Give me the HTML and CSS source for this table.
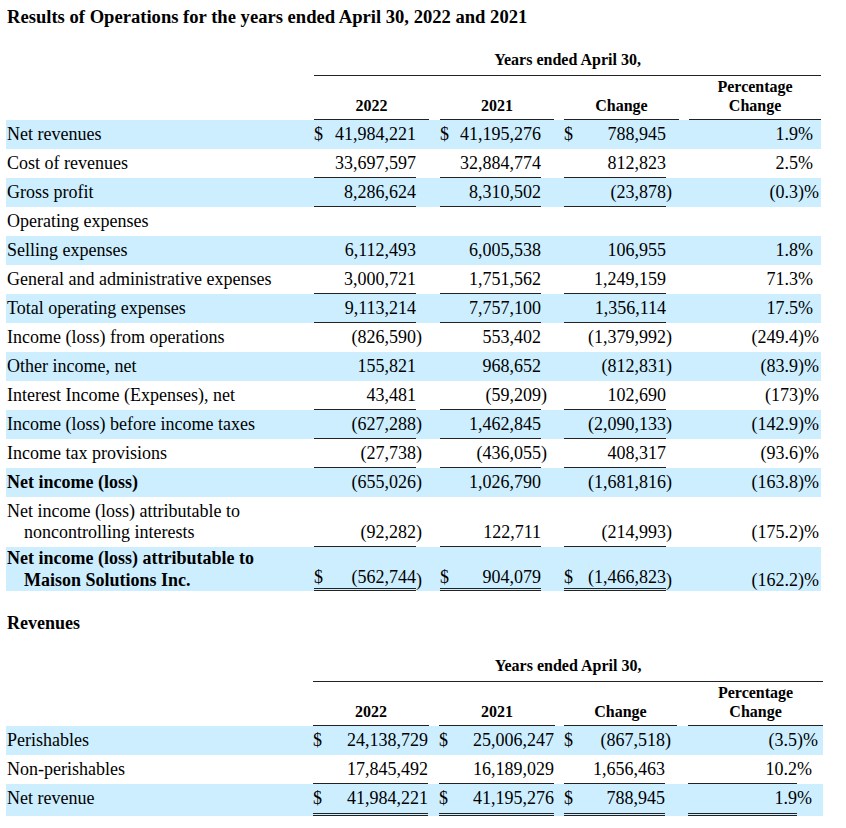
FILE: index.html
```html
<!DOCTYPE html>
<html lang="en">
<head>
  <meta charset="UTF-8">
  <title>Results of Operations</title>
  <link rel="stylesheet" href="styles.css">
</head>
<body>
  <h1 class="title">Results of Operations for the years ended April 30, 2022 and 2021</h1>

  <table class="fin ops">
    <colgroup>
      <col style="width:308px"><col style="width:12px"><col style="width:90px"><col style="width:13px">
      <col style="width:11px"><col style="width:12px"><col style="width:89px"><col style="width:13px">
      <col style="width:10px"><col style="width:12px"><col style="width:90px"><col style="width:13px">
      <col style="width:10px"><col style="width:109px"><col style="width:23px">
    </colgroup>
    <thead>
      <tr class="hd-top">
        <th></th>
        <th colspan="14" class="rule">Years ended April 30,</th>
      </tr>
      <tr class="hd">
        <th></th>
        <th colspan="3" class="u">2022</th><th></th>
        <th colspan="3" class="u">2021</th><th></th>
        <th colspan="3" class="u">Change</th><th></th>
        <th colspan="2" class="u">Percentage<br>Change</th>
      </tr>
    </thead>
    <tbody>
      <tr class="hl">
        <td class="lbl">Net revenues</td>
        <td class="cur">$</td><td class="num">41,984,221</td><td></td><td></td>
        <td class="cur">$</td><td class="num">41,195,276</td><td></td><td></td>
        <td class="cur">$</td><td class="num">788,945</td><td></td><td></td>
        <td class="num">1.9</td><td class="sfx">%</td>
      </tr>
      <tr>
        <td class="lbl">Cost of revenues</td>
        <td class="cur u"></td><td class="num u">33,697,597</td><td></td><td></td>
        <td class="cur u"></td><td class="num u">32,884,774</td><td></td><td></td>
        <td class="cur u"></td><td class="num u">812,823</td><td></td><td></td>
        <td class="num">2.5</td><td class="sfx">%</td>
      </tr>
      <tr class="hl">
        <td class="lbl">Gross profit</td>
        <td class="cur u"></td><td class="num u">8,286,624</td><td></td><td></td>
        <td class="cur u"></td><td class="num u">8,310,502</td><td></td><td></td>
        <td class="cur u"></td><td class="num u">(23,878</td><td class="sfx">)</td><td></td>
        <td class="num">(0.3</td><td class="sfx">)%</td>
      </tr>
      <tr>
        <td class="lbl">Operating expenses</td>
        <td></td><td></td><td></td><td></td>
        <td></td><td></td><td></td><td></td>
        <td></td><td></td><td></td><td></td>
        <td></td><td></td>
      </tr>
      <tr class="hl">
        <td class="lbl">Selling expenses</td>
        <td class="cur"></td><td class="num">6,112,493</td><td></td><td></td>
        <td class="cur"></td><td class="num">6,005,538</td><td></td><td></td>
        <td class="cur"></td><td class="num">106,955</td><td></td><td></td>
        <td class="num">1.8</td><td class="sfx">%</td>
      </tr>
      <tr>
        <td class="lbl">General and administrative expenses</td>
        <td class="cur u"></td><td class="num u">3,000,721</td><td></td><td></td>
        <td class="cur u"></td><td class="num u">1,751,562</td><td></td><td></td>
        <td class="cur u"></td><td class="num u">1,249,159</td><td></td><td></td>
        <td class="num">71.3</td><td class="sfx">%</td>
      </tr>
      <tr class="hl">
        <td class="lbl">Total operating expenses</td>
        <td class="cur u"></td><td class="num u">9,113,214</td><td></td><td></td>
        <td class="cur u"></td><td class="num u">7,757,100</td><td></td><td></td>
        <td class="cur u"></td><td class="num u">1,356,114</td><td></td><td></td>
        <td class="num">17.5</td><td class="sfx">%</td>
      </tr>
      <tr>
        <td class="lbl">Income (loss) from operations</td>
        <td class="cur"></td><td class="num">(826,590</td><td class="sfx">)</td><td></td>
        <td class="cur"></td><td class="num">553,402</td><td></td><td></td>
        <td class="cur"></td><td class="num">(1,379,992</td><td class="sfx">)</td><td></td>
        <td class="num">(249.4</td><td class="sfx">)%</td>
      </tr>
      <tr class="hl">
        <td class="lbl">Other income, net</td>
        <td class="cur"></td><td class="num">155,821</td><td></td><td></td>
        <td class="cur"></td><td class="num">968,652</td><td></td><td></td>
        <td class="cur"></td><td class="num">(812,831</td><td class="sfx">)</td><td></td>
        <td class="num">(83.9</td><td class="sfx">)%</td>
      </tr>
      <tr>
        <td class="lbl">Interest Income (Expenses), net</td>
        <td class="cur u"></td><td class="num u">43,481</td><td></td><td></td>
        <td class="cur u"></td><td class="num u">(59,209</td><td class="sfx">)</td><td></td>
        <td class="cur u"></td><td class="num u">102,690</td><td></td><td></td>
        <td class="num">(173</td><td class="sfx">)%</td>
      </tr>
      <tr class="hl">
        <td class="lbl">Income (loss) before income taxes</td>
        <td class="cur u"></td><td class="num u">(627,288</td><td class="sfx">)</td><td></td>
        <td class="cur u"></td><td class="num u">1,462,845</td><td></td><td></td>
        <td class="cur u"></td><td class="num u">(2,090,133</td><td class="sfx">)</td><td></td>
        <td class="num">(142.9</td><td class="sfx">)%</td>
      </tr>
      <tr>
        <td class="lbl">Income tax provisions</td>
        <td class="cur u"></td><td class="num u">(27,738</td><td class="sfx">)</td><td></td>
        <td class="cur u"></td><td class="num u">(436,055</td><td class="sfx">)</td><td></td>
        <td class="cur u"></td><td class="num u">408,317</td><td></td><td></td>
        <td class="num">(93.6</td><td class="sfx">)%</td>
      </tr>
      <tr class="hl">
        <td class="lbl strong">Net income (loss)</td>
        <td class="cur"></td><td class="num">(655,026</td><td class="sfx">)</td><td></td>
        <td class="cur"></td><td class="num">1,026,790</td><td></td><td></td>
        <td class="cur"></td><td class="num">(1,681,816</td><td class="sfx">)</td><td></td>
        <td class="num">(163.8</td><td class="sfx">)%</td>
      </tr>
      <tr>
        <td class="lbl">Net income (loss) attributable to<br><span class="ind">noncontrolling interests</span></td>
        <td class="cur u"></td><td class="num u">(92,282</td><td class="sfx">)</td><td></td>
        <td class="cur u"></td><td class="num u">122,711</td><td></td><td></td>
        <td class="cur u"></td><td class="num u">(214,993</td><td class="sfx">)</td><td></td>
        <td class="num">(175.2</td><td class="sfx">)%</td>
      </tr>
      <tr class="hl total">
        <td class="lbl strong">Net income (loss) attributable to<br><span class="ind">Maison Solutions Inc.</span></td>
        <td class="cur uu">$</td><td class="num uu">(562,744</td><td class="sfx">)</td><td></td>
        <td class="cur uu">$</td><td class="num uu">904,079</td><td></td><td></td>
        <td class="cur uu">$</td><td class="num uu">(1,466,823</td><td class="sfx">)</td><td></td>
        <td class="num">(162.2</td><td class="sfx">)%</td>
      </tr>
    </tbody>
  </table>

  <h2 class="sub">Revenues</h2>

  <table class="fin rev">
    <colgroup>
      <col style="width:307px"><col style="width:12px"><col style="width:103px"><col style="width:1px">
      <col style="width:10px"><col style="width:12px"><col style="width:103px"><col style="width:1px">
      <col style="width:9px"><col style="width:12px"><col style="width:89px"><col style="width:12px">
      <col style="width:11px"><col style="width:109px"><col style="width:26px">
    </colgroup>
    <thead>
      <tr class="hd-top">
        <th></th>
        <th colspan="14" class="rule">Years ended April 30,</th>
      </tr>
      <tr class="hd">
        <th></th>
        <th colspan="3" class="u">2022</th><th></th>
        <th colspan="3" class="u">2021</th><th></th>
        <th colspan="3" class="u">Change</th><th></th>
        <th colspan="2" class="u">Percentage<br>Change</th>
      </tr>
    </thead>
    <tbody>
      <tr class="hl">
        <td class="lbl">Perishables</td>
        <td class="cur">$</td><td class="num">24,138,729</td><td></td><td></td>
        <td class="cur">$</td><td class="num">25,006,247</td><td></td><td></td>
        <td class="cur">$</td><td class="num">(867,518</td><td class="sfx">)</td><td></td>
        <td class="num">(3.5</td><td class="sfx">)%</td>
      </tr>
      <tr>
        <td class="lbl">Non-perishables</td>
        <td class="cur u"></td><td class="num u">17,845,492</td><td></td><td></td>
        <td class="cur u"></td><td class="num u">16,189,029</td><td></td><td></td>
        <td class="cur u"></td><td class="num u">1,656,463</td><td></td><td></td>
        <td class="num u">10.2</td><td class="sfx">%</td>
      </tr>
      <tr class="hl total">
        <td class="lbl">Net revenue</td>
        <td class="cur uu">$</td><td class="num uu">41,984,221</td><td></td><td></td>
        <td class="cur uu">$</td><td class="num uu">41,195,276</td><td></td><td></td>
        <td class="cur uu">$</td><td class="num uu">788,945</td><td></td><td></td>
        <td class="num uu">1.9</td><td class="sfx">%</td>
      </tr>
    </tbody>
  </table>
</body>
</html>
```

FILE: styles.css
```css
* {
  box-sizing: border-box;
}
body {
  margin: 0;
  padding: 6px 0 0 6px;
  font-family: "Liberation Serif", "Times New Roman", serif;
  font-size: 18px;
  color: #000;
  background: #fff;
}
.title, .sub {
  margin: 0;
  padding-left: 1px;
  font-size: 18px;
  line-height: 21px;
  font-weight: bold;
}
.title {
  font-size: 18.6px;
}
.sub {
  margin-top: 22px;
}
.fin {
  border-collapse: separate;
  border-spacing: 0;
  table-layout: fixed;
}
.ops {
  width: 815px;
  margin-top: 23px;
}
.rev {
  width: 817px;
  margin-top: 22px;
}
.fin th {
  padding: 0;
  font-size: 16px;
  line-height: 19px;
  font-weight: bold;
  text-align: center;
  vertical-align: bottom;
  white-space: nowrap;
}
.hd-top th {
  padding-bottom: 7px;
}
.hd-top th.rule {
  box-shadow: inset 0 -1px #222;
}
.hd th {
  padding: 1px 0 5px;
}
.hd th.u {
  box-shadow: inset 0 -1px #222;
}
.fin td {
  padding: 4px 0;
  line-height: 21px;
  white-space: nowrap;
  vertical-align: bottom;
}
.fin tr.hl td {
  background: #cceeff;
}
.lbl {
  padding-left: 1px !important;
}
.lbl.strong {
  font-weight: bold;
}
.ind {
  padding-left: 17px;
}
.cur {
  text-align: left;
}
.num {
  text-align: right;
}
.sfx {
  text-align: left;
}
td.u {
  box-shadow: inset 0 -1px #222;
}
td.uu {
  border-bottom: 3px double #222;
  background-clip: padding-box;
}
.ops tr.total td {
  padding: 0;
  line-height: 22px;
}
.rev tr.total td {
  padding-bottom: 7px;
}
.rev tr.total td.uu {
  padding-bottom: 4px;
}
```
